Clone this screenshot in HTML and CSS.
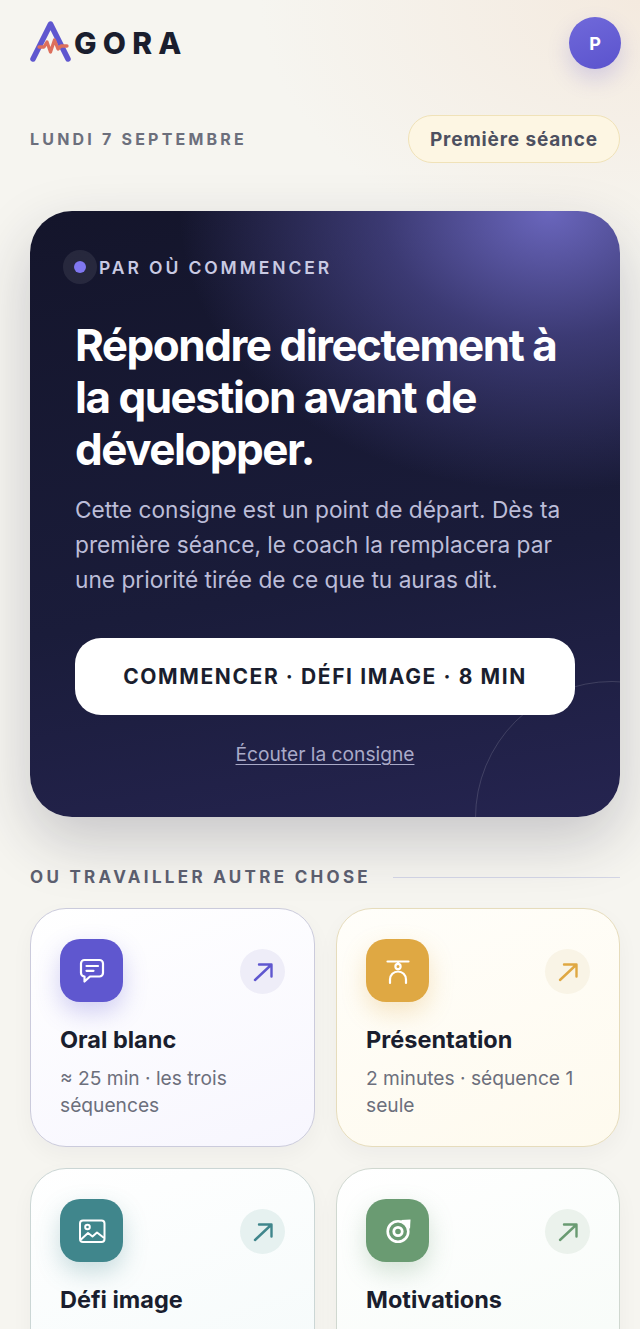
FILE: index.html
```html
<!DOCTYPE html>
<html lang="fr">
<head>
	<meta charset="UTF-8">
	<title>Agora</title>
	<link rel="stylesheet" href="styles.css">
</head>
<body>
	<div class="page">
		<header class="top">
			<div class="logo">
				<svg class="logo-mark" width="42" height="42" viewBox="0 0 42 42" fill="none">
					<path d="M3 39 L20.500 4 L38 39" stroke="#5f57cf" stroke-width="5.500" stroke-linecap="round" stroke-linejoin="round"/>
					<path d="M9 27 H14 L17 22 L20.500 32 L24.500 20 L28 29 L31 26 H37" stroke="#dd6f5c" stroke-width="3.300" stroke-linecap="round" stroke-linejoin="round"/>
				</svg>
				<span class="logo-text">GORA</span>
			</div>
			<div class="avatar">P</div>
		</header>

		<div class="date-row">
			<span class="date">LUNDI 7 SEPTEMBRE</span>
			<span class="pill">Première séance</span>
		</div>

		<section class="hero">
			<div class="hero-ring"></div>
			<div class="hero-label">
				<span class="dot"></span>
				<span>PAR OÙ COMMENCER</span>
			</div>
			<h1>Répondre directement à la question avant de développer.</h1>
			<p class="hero-text">Cette consigne est un point de départ. Dès ta première séance, le coach la remplacera par une priorité tirée de ce que tu auras dit.</p>
			<a class="start" href="#">COMMENCER · DÉFI IMAGE · 8 MIN</a>
			<a class="listen" href="#">Écouter la consigne</a>
		</section>

		<div class="section-title">
			<span>OU TRAVAILLER AUTRE CHOSE</span>
			<i></i>
		</div>

		<div class="cards">
			<a class="card card-violet" href="#">
				<div class="card-top">
					<span class="ico">
						<svg width="30" height="30" viewBox="0 0 30 30" fill="none" stroke="#fff" stroke-width="2.200" stroke-linecap="round" stroke-linejoin="round">
							<path d="M7.500 4 H22.500 A3.500 3.500 0 0 1 26 7.500 V17 A3.500 3.500 0 0 1 22.500 20.500 H13 L7.500 25.500 V20.500 A3.500 3.500 0 0 1 4 17 V7.500 A3.500 3.500 0 0 1 7.500 4 Z"/>
							<path d="M9.500 10 H21 M9.500 14.800 H16.500"/>
						</svg>
					</span>
					<span class="go">
						<svg width="22" height="22" viewBox="0 0 22 22" fill="none" stroke="currentColor" stroke-width="2.400" stroke-linecap="round" stroke-linejoin="round"><path d="M3 19 L19 4 M7 3.500 H19.500 V15.500"/></svg>
					</span>
				</div>
				<h2>Oral blanc</h2>
				<p>≈ 25 min · les trois séquences</p>
			</a>
			<a class="card card-gold" href="#">
				<div class="card-top">
					<span class="ico">
						<svg width="30" height="30" viewBox="0 0 30 30" fill="none" stroke="#fff" stroke-width="2.200" stroke-linecap="round" stroke-linejoin="round">
							<path d="M4.500 5.500 H25.500 M15 5.500 V8"/>
							<circle cx="15" cy="10.500" r="2.600"/>
							<path d="M7 27 V23.500 A8 8 0 0 1 23 23.500 V27"/>
						</svg>
					</span>
					<span class="go">
						<svg width="22" height="22" viewBox="0 0 22 22" fill="none" stroke="currentColor" stroke-width="2.400" stroke-linecap="round" stroke-linejoin="round"><path d="M3 19 L19 4 M7 3.500 H19.500 V15.500"/></svg>
					</span>
				</div>
				<h2>Présentation</h2>
				<p>2 minutes · séquence 1 seule</p>
			</a>
			<a class="card card-teal" href="#">
				<div class="card-top">
					<span class="ico">
						<svg width="30" height="30" viewBox="0 0 30 30" fill="none" stroke="#fff" stroke-width="2" stroke-linecap="round" stroke-linejoin="round">
							<rect x="3" y="4.500" width="24.500" height="21.500" rx="3"/>
							<circle cx="10.500" cy="11" r="2.300"/>
							<path d="M4.500 23 L11 17 L15.500 20.500 L20 16.500 L26.500 21.500"/>
						</svg>
					</span>
					<span class="go">
						<svg width="22" height="22" viewBox="0 0 22 22" fill="none" stroke="currentColor" stroke-width="2.400" stroke-linecap="round" stroke-linejoin="round"><path d="M3 19 L19 4 M7 3.500 H19.500 V15.500"/></svg>
					</span>
				</div>
				<h2>Défi image</h2>
			</a>
			<a class="card card-green" href="#">
				<div class="card-top">
					<span class="ico">
						<svg width="30" height="30" viewBox="0 0 30 30" fill="none" stroke="#fff">
							<path d="M18 4 L27.500 3.500 L27 13 Z" fill="#fff" stroke="none"/>
							<circle cx="15" cy="15.500" r="10.300" stroke-width="2.600"/>
							<circle cx="15" cy="15.500" r="4.200" stroke-width="2.800"/>
						</svg>
					</span>
					<span class="go">
						<svg width="22" height="22" viewBox="0 0 22 22" fill="none" stroke="currentColor" stroke-width="2.400" stroke-linecap="round" stroke-linejoin="round"><path d="M3 19 L19 4 M7 3.500 H19.500 V15.500"/></svg>
					</span>
				</div>
				<h2>Motivations</h2>
			</a>
		</div>
	</div>
</body>
</html>
```

FILE: styles.css
```css
html, body {
	margin: 0;
	height: 100%;
	overflow: hidden;
}
body {
	font-family: Inter, "Liberation Sans", sans-serif;
	color: #1a1e2e;
	background: #f6f5f0;
}
a {
	text-decoration: none;
	color: inherit;
}
h1, h2, p {
	margin: 0;
}
.page {
	padding: 17px 20px 0 30px;
	height: 1329px;
	box-sizing: border-box;
	overflow: hidden;
	background:
		radial-gradient(380px 260px at 100% 0, #f4eadf 0%, rgba(244, 234, 223, 0) 100%),
		#f6f5f0;
}

/* header */
.top {
	display: flex;
	justify-content: space-between;
	align-items: flex-start;
	height: 52px;
}
.logo {
	display: flex;
	align-items: center;
	padding-top: 3px;
}
.logo-mark {
	display: block;
}
.logo-text {
	font-size: 30px;
	font-weight: 800;
	letter-spacing: 6.200px;
	margin-left: 2px;
	padding-top: 4px;
	color: #1a1e2e;
}
.avatar {
	width: 52px;
	height: 52px;
	border-radius: 50%;
	background: linear-gradient(160deg, #7069da, #5b53cd);
	color: #fff;
	font-size: 18px;
	font-weight: 700;
	display: flex;
	align-items: center;
	justify-content: center;
	margin-right: -1px;
	box-shadow: 0 10px 22px rgba(91, 83, 205, 0.22);
}
.date-row {
	display: flex;
	justify-content: space-between;
	align-items: center;
	margin-top: 46px;
}
.date {
	font-size: 16px;
	font-weight: 700;
	letter-spacing: 3.2px;
	color: #6c6f7c;
}
.pill {
	height: 48px;
	box-sizing: border-box;
	border: 1.5px solid #f0e2b8;
	border-radius: 24px;
	background: #fdf6e3;
	padding: 0 21px;
	display: flex;
	align-items: center;
	font-size: 19px;
	font-weight: 700;
	letter-spacing: 0.85px;
	color: #4d5060;
}

/* main card */
.hero {
	position: relative;
	overflow: hidden;
	margin-top: 48px;
	height: 606px;
	box-sizing: border-box;
	padding: 39px 45px 0;
	border-radius: 42px;
	color: #fff;
	background:
		radial-gradient(370px 280px at 88% 0, #6a66bd 0%, rgba(90, 86, 170, 0.55) 45%, rgba(60, 58, 120, 0) 100%),
		linear-gradient(170deg, #14152b 0%, #1a1c3a 60%, #252450 100%);
	box-shadow: 0 24px 60px rgba(30, 30, 60, 0.22);
}
.hero-ring {
	position: absolute;
	left: 445px;
	top: 470px;
	width: 272px;
	height: 272px;
	border-radius: 50%;
	border: 1.5px solid rgba(255, 255, 255, 0.14);
}
.hero-label {
	display: flex;
	align-items: center;
	gap: 2px;
	margin-left: -12px;
	font-size: 17.500px;
	font-weight: 600;
	letter-spacing: 2.9px;
	color: #c9cae3;
}
.dot {
	width: 12px;
	height: 12px;
	border-radius: 50%;
	background: #8077f0;
	border: 11px solid rgba(255, 255, 255, 0.08);
	background-clip: padding-box;
}
.hero h1 {
	margin-top: 35px;
	font-size: 44px;
	line-height: 52px;
	font-weight: 700;
	letter-spacing: -1.5px;
}
.hero-text {
	margin-top: 17px;
	font-size: 22.700px;
	line-height: 35px;
	color: #bcbdd8;
}
.start {
	position: relative;
	display: flex;
	align-items: center;
	justify-content: center;
	height: 77px;
	margin-top: 40.500px;
	border-radius: 26px;
	background: #fff;
	color: #1a1e2e;
	font-size: 21px;
	font-weight: 700;
	letter-spacing: 1.6px;
}
.listen {
	position: relative;
	display: block;
	width: max-content;
	margin: 27px auto 0;
	font-size: 19.200px;
	color: #a9aac8;
	text-decoration: underline;
	text-underline-offset: 3px;
	text-decoration-thickness: 1px;
}

/* other exercises */
.section-title {
	display: flex;
	align-items: center;
	gap: 22px;
	margin-top: 50px;
	font-size: 17px;
	font-weight: 700;
	letter-spacing: 3.3px;
	color: #5d6070;
}
.section-title i {
	flex: 1;
	height: 1px;
	background: #d4d6e6;
}
.cards {
	display: grid;
	grid-template-columns: 285px 284px;
	gap: 21px;
	margin-top: 21px;
}
.card {
	display: block;
	box-sizing: border-box;
	height: 239px;
	padding: 30px 29px 0;
	border-radius: 36px;
	border: 1.5px solid;
	box-shadow: 0 8px 22px rgba(30, 30, 60, 0.04);
}
.card-top {
	display: flex;
	justify-content: space-between;
	align-items: center;
}
.ico {
	width: 63px;
	height: 63px;
	border-radius: 20px;
	display: flex;
	align-items: center;
	justify-content: center;
}
.go {
	width: 45px;
	height: 45px;
	margin-top: 2px;
	border-radius: 50%;
	display: flex;
	align-items: center;
	justify-content: center;
}
.card h2 {
	margin-top: 22px;
	font-size: 23.500px;
	line-height: 32px;
	font-weight: 700;
	color: #1a1e2e;
}
.card p {
	margin-top: 9px;
	font-size: 19.200px;
	line-height: 27px;
	color: #6c6f7c;
}
.card-violet {
	border-color: #cbcbdc;
	background: linear-gradient(160deg, #fff, #f7f6fe);
}
.card-violet .ico {
	background: #5f57cf;
	box-shadow: 0 10px 24px rgba(95, 87, 207, 0.28);
}
.card-violet .go {
	background: #eeedf8;
	color: #5f57cf;
}
.card-gold {
	border-color: #e6dcbc;
	background: linear-gradient(160deg, #fffefa, #fefaee);
}
.card-gold .ico {
	background: #dfa843;
	box-shadow: 0 10px 24px rgba(223, 168, 67, 0.28);
}
.card-gold .go {
	background: #f9f4e6;
	color: #dfa843;
}
.card-teal {
	border-color: #cbd6d5;
	background: linear-gradient(160deg, #fff, #f4fafa);
}
.card-teal .ico {
	background: #40868c;
	box-shadow: 0 10px 24px rgba(64, 134, 140, 0.28);
}
.card-teal .go {
	background: #e6f1f0;
	color: #40868c;
}
.card-green {
	border-color: #d0d8d0;
	background: linear-gradient(160deg, #fff, #f6fbf7);
}
.card-green .ico {
	background: #6a9b72;
	box-shadow: 0 10px 24px rgba(106, 155, 114, 0.28);
}
.card-green .go {
	background: #ebf2ec;
	color: #6a9b72;
}
```
